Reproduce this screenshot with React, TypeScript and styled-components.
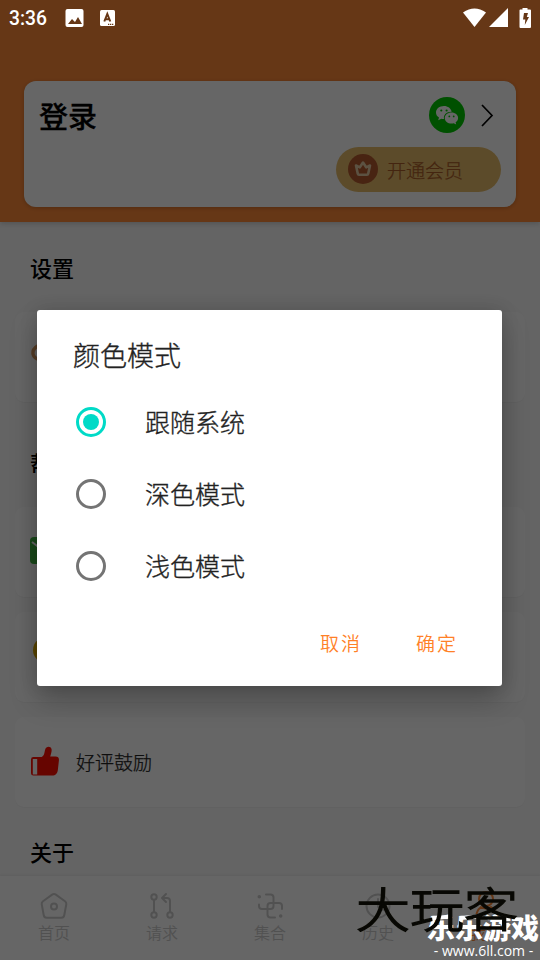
import React from "react";
import styled, { createGlobalStyle, css } from "styled-components";

const Global = createGlobalStyle`
  * { box-sizing: border-box; }
  body { margin: 0; background: #fafafa; overflow: hidden; font-family: Roboto, "Noto Sans CJK SC", sans-serif; }
  button { border: 0; padding: 0; background: none; font: inherit; color: inherit; }
`;

const Screen = styled.div`
  position: relative;
  width: 540px;
  height: 960px;
  display: flex;
  flex-direction: column;
  overflow: hidden;
  background: #fafafa;
`;

const StatusBar = styled.div`
  height: 36px;
  padding: 0 9px;
  display: flex;
  align-items: center;
  color: #fff;
`;
const Clock = styled.span`
  width: 56px;
  padding-top: 1px;
  font: 500 19.3px/36px Roboto, sans-serif;
`;
const StatusIcons = styled.div<{ $end?: boolean }>`
  display: flex;
  align-items: center;
  gap: ${(p) => (p.$end ? 3 : 16)}px;
  ${(p) => p.$end && css`margin-left: auto; padding-bottom: 1px;`}
  svg { display: block; }
`;

const Header = styled.header`
  height: 222px;
  flex: none;
  padding: 81px 24px 0;
  background: #ff8a38;
  box-shadow: 0 2px 5px rgba(0, 0, 0, 0.16);
  z-index: 1;
`;
const ProfileCard = styled.section`
  height: 126px;
  padding: 16px 15px;
  border-radius: 12px;
  background: #fff;
  box-shadow: 0 1px 4px rgba(0, 0, 0, 0.2);
  display: flex;
  flex-direction: column;
  align-items: flex-end;
  gap: 14px;
`;
const LoginRow = styled.div`
  width: 100%;
  height: 36px;
  display: flex;
  align-items: center;
`;
const LoginText = styled.strong`
  flex: 1;
  padding-top: 5px;
  font-size: 29px;
  line-height: 36px;
  font-weight: 500;
  color: #000;
  -webkit-text-stroke: 0.3px currentColor;
`;
const WeChatBadge = styled.span`
  width: 36px;
  height: 36px;
  border-radius: 50%;
  background: #00c800;
  display: grid;
  place-items: center;
`;
const Chevron = styled.svg`
  margin: 0 7px 0 15px;
`;
const MemberButton = styled.button`
  width: 165px;
  height: 45px;
  flex: none;
  padding: 0 0 1px 12px;
  border-radius: 23px;
  display: flex;
  align-items: center;
  gap: 9px;
  background: #e6bc69;
  color: #aa5c28;
  font-size: 19px;
  font-weight: 300;
  -webkit-text-stroke: 0.25px currentColor;
`;
const Crown = styled.span`
  width: 30px;
  height: 30px;
  border-radius: 50%;
  background: #b45a2e;
  display: grid;
  place-items: center;
`;

const Content = styled.main`
  flex: 1;
  min-height: 0;
  overflow: hidden;
  padding: 0 15px;
  display: flex;
  flex-direction: column;
`;
const SectionTitle = styled.h2<{ $height: number; $offset?: number }>`
  flex: none;
  height: ${(p) => p.$height}px;
  margin: 0;
  padding: ${(p) => p.$offset ?? 0}px 0 0 15px;
  display: flex;
  align-items: center;
  font-size: 22px;
  font-weight: 500;
  color: #000;
`;
const Group = styled.div`
  flex: none;
  display: grid;
  gap: 15px;
`;
const SettingRow = styled.div`
  height: 90px;
  padding: 0 0 2px 15px;
  border-radius: 9px;
  background: #fff;
  box-shadow: 0 1px 1px rgba(0, 0, 0, 0.03);
  display: flex;
  align-items: center;
  gap: 16px;
  font-size: 19px;
  font-weight: 300;
  color: #222;
  -webkit-text-stroke: 0.25px currentColor;
`;

const NavBar = styled.nav`
  height: 84px;
  flex: none;
  padding-top: 15px;
  display: grid;
  grid-template-columns: repeat(5, 1fr);
  background: #fff;
  box-shadow: 0 -1px 3px rgba(0, 0, 0, 0.07);
  z-index: 1;
`;
const Tab = styled.div<{ $active?: boolean }>`
  display: flex;
  flex-direction: column;
  align-items: center;
  gap: 1px;
  color: ${(p) => (p.$active ? "#ff8a38" : "#cbcbcb")};
  font-size: 16px;
  line-height: 24px;
  font-weight: 350;
  svg { display: block; fill: none; stroke: currentColor; stroke-width: 2; stroke-linecap: round; stroke-linejoin: round; }
`;

const Scrim = styled.div`
  position: absolute;
  inset: 0;
  z-index: 2;
  padding: 310px 38px 0 37px;
  background: rgba(0, 0, 0, 0.6);
`;
const Dialog = styled.div`
  height: 376px;
  border-radius: 3px;
  background: #fff;
  box-shadow: 0 14px 28px rgba(0, 0, 0, 0.24), 0 0 18px rgba(0, 0, 0, 0.12);
  color: #222;
  font-weight: 300;
  -webkit-text-stroke: 0.35px currentColor;
`;
const DialogTitle = styled.h1`
  margin: 0;
  height: 76px;
  padding: 30px 36px 0;
  font-size: 27px;
  line-height: 34px;
  font-weight: 300;
`;
const Option = styled.div`
  height: 72px;
  padding-left: 39px;
  display: flex;
  align-items: center;
  gap: 39px;
  font-size: 25px;
`;
const OptionLabel = styled.span`
  padding-bottom: 2px;
`;
const Radio = styled.span<{ $checked?: boolean }>`
  width: 30px;
  height: 30px;
  border-radius: 50%;
  border: 3px solid ${(p) => (p.$checked ? "#00dac7" : "#747474")};
  display: grid;
  place-items: center;
  &::after {
    content: "";
    width: 16px;
    height: 16px;
    border-radius: 50%;
    background: ${(p) => (p.$checked ? "#00dac7" : "transparent")};
  }
`;
const Actions = styled.div`
  height: 84px;
  padding: 17px 44px 0 0;
  display: flex;
  justify-content: flex-end;
  gap: 54px;
`;
const ActionButton = styled.button`
  height: 46px;
  color: #ff8127;
  font-size: 19px;
  font-weight: 350;
  letter-spacing: 2px;
  -webkit-text-stroke: 0;
`;

const Overlay = styled.div`
  position: absolute;
  inset: 0;
  z-index: 3;
  pointer-events: none;
`;
const InkMark = styled.div`
  position: absolute;
  left: 356px;
  top: 881px;
  font-size: 54px;
  line-height: 60px;
  font-weight: 300;
  -webkit-text-stroke: 1.6px currentColor;
  transform: scaleY(0.87);
  color: #080804;
  text-shadow: 0 0 1px #77703a;
  white-space: nowrap;
`;
const SiteMark = styled.div`
  position: absolute;
  left: 427px;
  top: 913px;
  width: 113px;
  color: #fff;
  font-size: 28px;
  line-height: 34px;
  font-weight: 900;
  white-space: nowrap;
`;
const SiteUrl = styled.div`
  font: 400 14px/14px "Open Sans", sans-serif;
  text-align: center;
  margin-top: -3px;
`;

const HomeIcon = () => (
  <svg width="30" height="30" viewBox="0 0 30 30">
    <path d="M13.5 3.4 4 10.2q-1.6 1.2-1.3 3L4.700 24q.4 2.700 3 2.700h14.600q2.600 0 3-2.700l2-10.800q.3-1.800-1.300-3L16.500 3.400q-1.500-1-3 0Z" />
    <circle cx="15" cy="15.500" r="3" />
  </svg>
);
const RequestIcon = () => (
  <svg width="30" height="30" viewBox="0 0 30 30">
    <circle cx="7" cy="6" r="2.700" />
    <circle cx="7" cy="24" r="2.700" />
    <circle cx="23" cy="24" r="2.700" />
    <path d="M7 9v12M23 21V10q0-3-3-3h-4M19 3l-4 4 4 4" />
  </svg>
);
const CollectionIcon = () => (
  <svg width="30" height="30" viewBox="0 0 30 30">
    <path d="M11 3.500h4.500q3 0 3 3V15q0 3-3 3H7q-3 0-3-3v-1.500M20 26.500h-4.500q-3 0-3-3V15q0-3 3-3H24q3 0 3 3v3" />
    <circle cx="4.300" cy="5.700" r=".8" fill="currentColor" />
    <circle cx="25.700" cy="25" r=".8" fill="currentColor" />
  </svg>
);
const HistoryIcon = () => (
  <svg width="30" height="30" viewBox="0 0 30 30">
    <circle cx="15" cy="15" r="11.500" />
    <path d="M15 8v8l5 3" />
  </svg>
);
const MineIcon = () => (
  <svg width="30" height="30" viewBox="0 0 30 30">
    <circle cx="15" cy="8" r="7" />
    <path d="M5 27q0-7 5-11 5 3 10 0 5 4 5 11Z" />
  </svg>
);

const tabs = [
  { label: "首页", Icon: HomeIcon },
  { label: "请求", Icon: RequestIcon },
  { label: "集合", Icon: CollectionIcon },
  { label: "历史", Icon: HistoryIcon },
  { label: "我的", Icon: MineIcon, active: true },
];

export default function App() {
  return (
    <>
      <Global />
      <Screen>
        <Header>
          <ProfileCard>
            <LoginRow>
              <LoginText>登录</LoginText>
              <WeChatBadge>
                <svg width="24" height="20" viewBox="0 0 24 20">
                  <path fill="#fff" d="M9 1C4.500 1 1 3.800 1 7.400c0 2.100 1.100 3.900 3 5.100l-.8 2.800 3.200-1.600c.9.200 1.600.3 2.600.2-.9-4.200 2.700-7.400 7.700-7.200C16 3.400 12.900 1 9 1Z" />
                  <path fill="#fff" d="M16.500 7.400c-3.800 0-6.700 2.400-6.700 5.500s2.900 5.600 6.700 5.600c.8 0 1.500-.1 2.200-.3l2.500 1.300-.6-2.200c1.500-1 2.500-2.600 2.500-4.400 0-3.100-2.900-5.500-6.600-5.500Z" />
                  <g fill="#00c800">
                    <circle cx="6.300" cy="5.500" r="1.100" />
                    <circle cx="11.600" cy="5.500" r="1.100" />
                    <circle cx="14.300" cy="11.400" r=".9" />
                    <circle cx="18.700" cy="11.400" r=".9" />
                  </g>
                </svg>
              </WeChatBadge>
              <Chevron width="14" height="24" viewBox="0 0 14 24" fill="none" stroke="#000" strokeWidth="1.700">
                <path d="m2 2 10 10.500L2 23" />
              </Chevron>
            </LoginRow>
            <MemberButton>
              <Crown>
                <svg width="18" height="18" viewBox="0 0 18 18" fill="none" stroke="#e6cda5" strokeWidth="2.600" strokeLinejoin="round">
                  <path d="m2 5.500 3.800 1.800L9 2.500l3.200 4.800L16 5.500l-1.800 8.300q-.2 1-1.200 1H5q-1 0-1.200-1Z" />
                </svg>
              </Crown>
              开通会员
            </MemberButton>
          </ProfileCard>
        </Header>
        <Content>
          <SectionTitle $height={90}>设置</SectionTitle>
          <Group>
            <SettingRow>
              <svg width="30" height="30" viewBox="0 0 30 30" fill="none" stroke="#d99a60" strokeWidth="3.500">
                <path d="M9 4Q2 8 3 13q1 5 8 6" />
              </svg>
            </SettingRow>
          </Group>
          <SectionTitle $height={105} $offset={14}>帮助</SectionTitle>
          <Group>
            <SettingRow>
              <svg width="30" height="30" viewBox="0 0 30 30">
                <rect y="1" width="30" height="27" rx="4" fill="#43b944" />
                <path d="m2 6 13 10L28 6" fill="none" stroke="#fff" strokeWidth="2" />
              </svg>
            </SettingRow>
            <SettingRow>
              <svg width="30" height="30" viewBox="0 0 30 30">
                <circle cx="16" cy="9" r="13" fill="#e0ad00" />
              </svg>
            </SettingRow>
            <SettingRow>
              <svg width="30" height="31" viewBox="0 0 30 31">
                <path
                  fill="#ff0d00"
                  fillRule="evenodd"
                  d="M3.500 11h8.200c3-1.500 2.500-4.500 3.500-7.500.8-3.500 5.500-3.800 6.300-.4.500 2-.5 5-1.300 7.500h5.300c2.600 0 3.700 1.500 3.400 4l-1 9c-.4 4-2.500 6-5.500 6h-19q-2.400 0-2.400-2.400V13.400Q1 11 3.500 11ZM2.800 13v15.400h4.400V13Z"
                />
              </svg>
              好评鼓励
            </SettingRow>
          </Group>
          <SectionTitle $height={88}>关于</SectionTitle>
        </Content>
        <NavBar>
          {tabs.map(({ label, Icon, active }) => (
            <Tab key={label} $active={active}>
              <Icon />
              {label}
            </Tab>
          ))}
        </NavBar>
        <Scrim>
          <Dialog role="dialog">
            <DialogTitle>颜色模式</DialogTitle>
            {["跟随系统", "深色模式", "浅色模式"].map((label, i) => (
              <Option key={label}>
                <Radio $checked={i === 0} />
                <OptionLabel>{label}</OptionLabel>
              </Option>
            ))}
            <Actions>
              <ActionButton>取消</ActionButton>
              <ActionButton>确定</ActionButton>
            </Actions>
          </Dialog>
        </Scrim>
        <Overlay>
          <StatusBar>
            <Clock>3:36</Clock>
            <StatusIcons>
              <svg width="19" height="18" viewBox="0 0 19 18">
                <rect width="18" height="18" rx="2" x=".5" fill="#fff" />
                <path d="m3 15 4-5 3 3 3-5 4 7Z" fill="#663716" />
              </svg>
              <svg width="15" height="16" viewBox="0 0 15 16">
                <rect width="15" height="16" rx="1.500" fill="#fff" />
                <path d="m4.300 11.500 3-7.500 3 7.500M5.500 9.300h3.600" fill="none" stroke="#663716" strokeWidth="2" />
                <path d="M8 14.300h1.300m.7 0h1.300m.7 0h1.300" stroke="#663716" strokeWidth="1.200" />
              </svg>
            </StatusIcons>
            <StatusIcons $end>
              <svg width="23" height="19" viewBox="0 0 23 19">
                <path d="M0 4.500Q11.500-3.500 23 4.500L11.500 19Z" fill="#fff" />
              </svg>
              <svg width="19" height="19" viewBox="0 0 19 19">
                <path d="M19 0v19H0Z" fill="#fff" />
              </svg>
              <svg width="20" height="22" viewBox="0 0 20 22">
                <path d="M9 2.500h2.500V1h5v1.500H19a1 1 0 0 1 1 1V20a1 1 0 0 1-1 1H9.500a1 1 0 0 1-1-1V3.500a1 1 0 0 1 .5-1Z" fill="#fff" />
                <path d="m13 6h4l-1.200 4H18l-4.200 8 .5-5.500H12Z" fill="#663716" />
              </svg>
            </StatusIcons>
          </StatusBar>
          <SiteMark>
            乐乐游戏
            <SiteUrl>- www.6ll.com -</SiteUrl>
          </SiteMark>
          <InkMark>大玩客</InkMark>
        </Overlay>
      </Screen>
    </>
  );
}
